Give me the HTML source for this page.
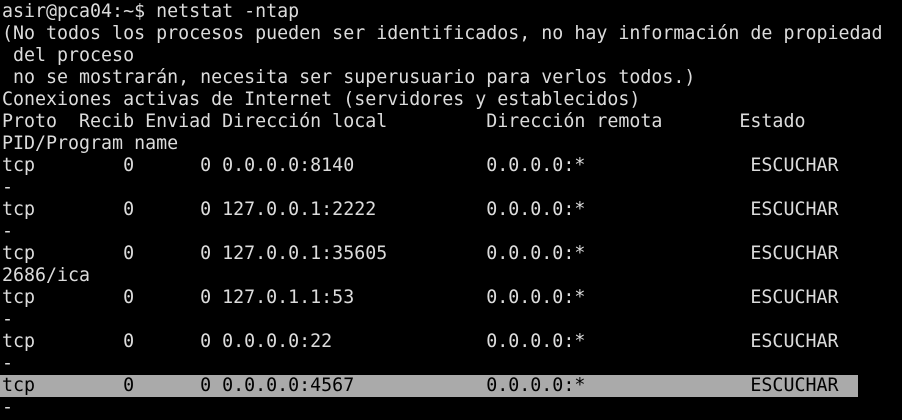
<!DOCTYPE html>
<html><head><meta charset="utf-8"><style>
html,body{margin:0;padding:0;background:#000;width:902px;height:420px;overflow:hidden}
pre{margin:0;padding:1px 0 0 2px;font-family:"DejaVu Sans Mono","Liberation Mono",monospace;font-size:18.3px;line-height:22px;color:#dcdcdc;white-space:pre}
.hl{background:#aaa;color:#000;display:inline-block;width:856px;margin-left:-2px;padding-left:2px}
</style></head><body><pre>asir@pca04:~$ netstat -ntap
(No todos los procesos pueden ser identificados, no hay información de propiedad
 del proceso
 no se mostrarán, necesita ser superusuario para verlos todos.)
Conexiones activas de Internet (servidores y establecidos)
Proto  Recib Enviad Dirección local         Dirección remota       Estado
PID/Program name
tcp        0      0 0.0.0.0:8140            0.0.0.0:*               ESCUCHAR
-
tcp        0      0 127.0.0.1:2222          0.0.0.0:*               ESCUCHAR
-
tcp        0      0 127.0.0.1:35605         0.0.0.0:*               ESCUCHAR
2686/ica
tcp        0      0 127.0.1.1:53            0.0.0.0:*               ESCUCHAR
-
tcp        0      0 0.0.0.0:22              0.0.0.0:*               ESCUCHAR
-
<span class="hl">tcp        0      0 0.0.0.0:4567            0.0.0.0:*               ESCUCHAR</span>
-
</pre></body></html>
